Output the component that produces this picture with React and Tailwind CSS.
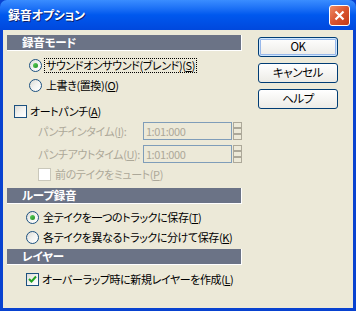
import React from 'react';

const font = { fontFamily: '"Noto Sans CJK JP", "Liberation Sans", sans-serif' };

function Radio({ checked }) {
  return (
    <span className="relative flex h-[13px] w-[13px] shrink-0 items-center justify-center rounded-full border border-[#1C5180] bg-gradient-to-br from-[#DCDBD5] via-[#F3F3F1] to-white">
      {checked && (
        <span className="h-[5px] w-[5px] rounded-full bg-gradient-to-br from-[#5FD35F] to-[#1E8F1E]" />
      )}
    </span>
  );
}

function Check({ checked, disabled }) {
  return (
    <span
      className={
        'flex h-[13px] w-[13px] shrink-0 items-center justify-center border ' +
        (disabled
          ? 'border-[#CAC8BB] bg-white'
          : 'border-[#1C5180] bg-gradient-to-br from-[#DCDBD5] via-[#F3F3F1] to-white')
      }
    >
      {checked && (
        <svg width="9" height="9" viewBox="0 0 9 9">
          <path d="M1 4 L3.5 6.5 L8 1.5" fill="none" stroke="#21A121" strokeWidth="2" />
        </svg>
      )}
    </span>
  );
}

function Header({ children }) {
  return (
    <div className="flex h-[16px] items-center whitespace-nowrap border-b border-r border-white bg-[#6B7386] pl-[15px] text-[11.5px] font-bold leading-none tracking-[-0.2px] text-white">
      {children}
    </div>
  );
}

function Spinner() {
  return (
    <div className="ml-[1px] flex h-[18px] w-[9px] flex-col justify-between">
      <span className="h-[6px] border border-[#ACA899]" />
      <span className="h-[6px] border border-[#ACA899]" />
      <span className="h-[6px] border border-[#ACA899]" />
    </div>
  );
}

function TimeRow({ label, className }) {
  return (
    <div className={'flex h-[18px] items-center pl-[31px] ' + className}>
      <span className="w-[107px] whitespace-nowrap text-[#ACA899]">{label}</span>
      <div className="flex h-[18px] w-[91px] items-center border border-[#7F9DB9] pl-[2px] text-[#ACA899]">1:01:000</div>
      <Spinner />
    </div>
  );
}

function Button({ children, primary }) {
  return (
    <div
      className={
        'flex h-[20px] w-[80px] items-center justify-center rounded-[3px] border border-[#003C74] bg-gradient-to-b from-white to-[#ECEBE6] text-[11.5px] text-black ' +
        (primary ? 'shadow-[inset_0_0_0_1px_#CEE7FF,inset_0_0_0_2px_#98B8EA]' : '')
      }
    >
      {children}
    </div>
  );
}

export default function App() {
  return (
    <div className="flex h-[311px] w-[356px] flex-col bg-[#0842D0] [font-feature-settings:'palt']" style={font}>
      <div className="flex h-[30px] shrink-0 items-center justify-between rounded-t-[7px] bg-gradient-to-b from-[#3A8DFF] via-[#0058EE] to-[#0048DD] pl-[8px] pr-[6px]">
        <span className="whitespace-nowrap text-[12px] font-bold tracking-[-0.2px] text-white [text-shadow:1px_1px_#0A1F6E]">録音オプション</span>
        <div className="flex h-[21px] w-[21px] items-center justify-center rounded-[3px] border border-white bg-gradient-to-br from-[#EE8A64] via-[#D9542F] to-[#C23A16]">
          <svg width="11" height="11" viewBox="0 0 11 11">
            <path d="M1.5 1.5 L9.5 9.5 M9.5 1.5 L1.5 9.5" stroke="white" strokeWidth="2.2" />
          </svg>
        </div>
      </div>
      <div className="mx-[3px] mb-[3px] flex flex-1 bg-[#ECE9D8] pt-[5px] pl-[4px] text-[11px] leading-none tracking-[-0.4px] text-black">
        <div className="flex w-[235px] shrink-0 flex-col">
          <Header>録音モード</Header>
          <div className="mt-[4px] flex h-[20px] items-center whitespace-nowrap pl-[22px]">
            <Radio checked />
            <span className="ml-[2px] border border-dotted border-black px-[1px] py-[1px]">サウンドオンサウンド(ブレンド)(<u>S</u>)</span>
          </div>
          <div className="flex h-[20px] items-center whitespace-nowrap pl-[22px]">
            <Radio />
            <span className="ml-[4px]">上書き(置換)(<u>O</u>)</span>
          </div>
          <div className="mt-[6px] flex h-[20px] items-center whitespace-nowrap pl-[7px]">
            <Check />
            <span className="ml-[3px]">オートパンチ(<u>A</u>)</span>
          </div>
          <TimeRow label={<>パンチインタイム(<u>I</u>):</>} className="mt-[1px]" />
          <TimeRow label={<>パンチアウトタイム(<u>U</u>):</>} className="mt-[5px]" />
          <div className="mt-[3px] flex h-[16px] items-center whitespace-nowrap pl-[31px]">
            <Check disabled />
            <span className="ml-[4px] text-[#ACA899]">前のテイクをミュート(<u>P</u>)</span>
          </div>
          <div className="mt-[6px]">
            <Header>ループ録音</Header>
          </div>
          <div className="mt-[3px] flex h-[20px] items-center whitespace-nowrap pl-[19px]">
            <Radio checked />
            <span className="ml-[4px]">全テイクを一つのトラックに保存(<u>T</u>)</span>
          </div>
          <div className="flex h-[20px] items-center whitespace-nowrap pl-[19px]">
            <Radio />
            <span className="ml-[4px]">各テイクを異なるトラックに分けて保存(<u>K</u>)</span>
          </div>
          <div className="mt-[2px]">
            <Header>レイヤー</Header>
          </div>
          <div className="mt-[4px] flex h-[20px] items-center whitespace-nowrap pl-[19px]">
            <Check checked />
            <span className="ml-[3px]">オーバーラップ時に新規レイヤーを作成(<u>L</u>)</span>
          </div>
        </div>
        <div className="ml-[16px] flex flex-col gap-[6px] pt-[2px]">
          <Button primary>OK</Button>
          <Button>キャンセル</Button>
          <Button>ヘルプ</Button>
        </div>
      </div>
    </div>
  );
}
